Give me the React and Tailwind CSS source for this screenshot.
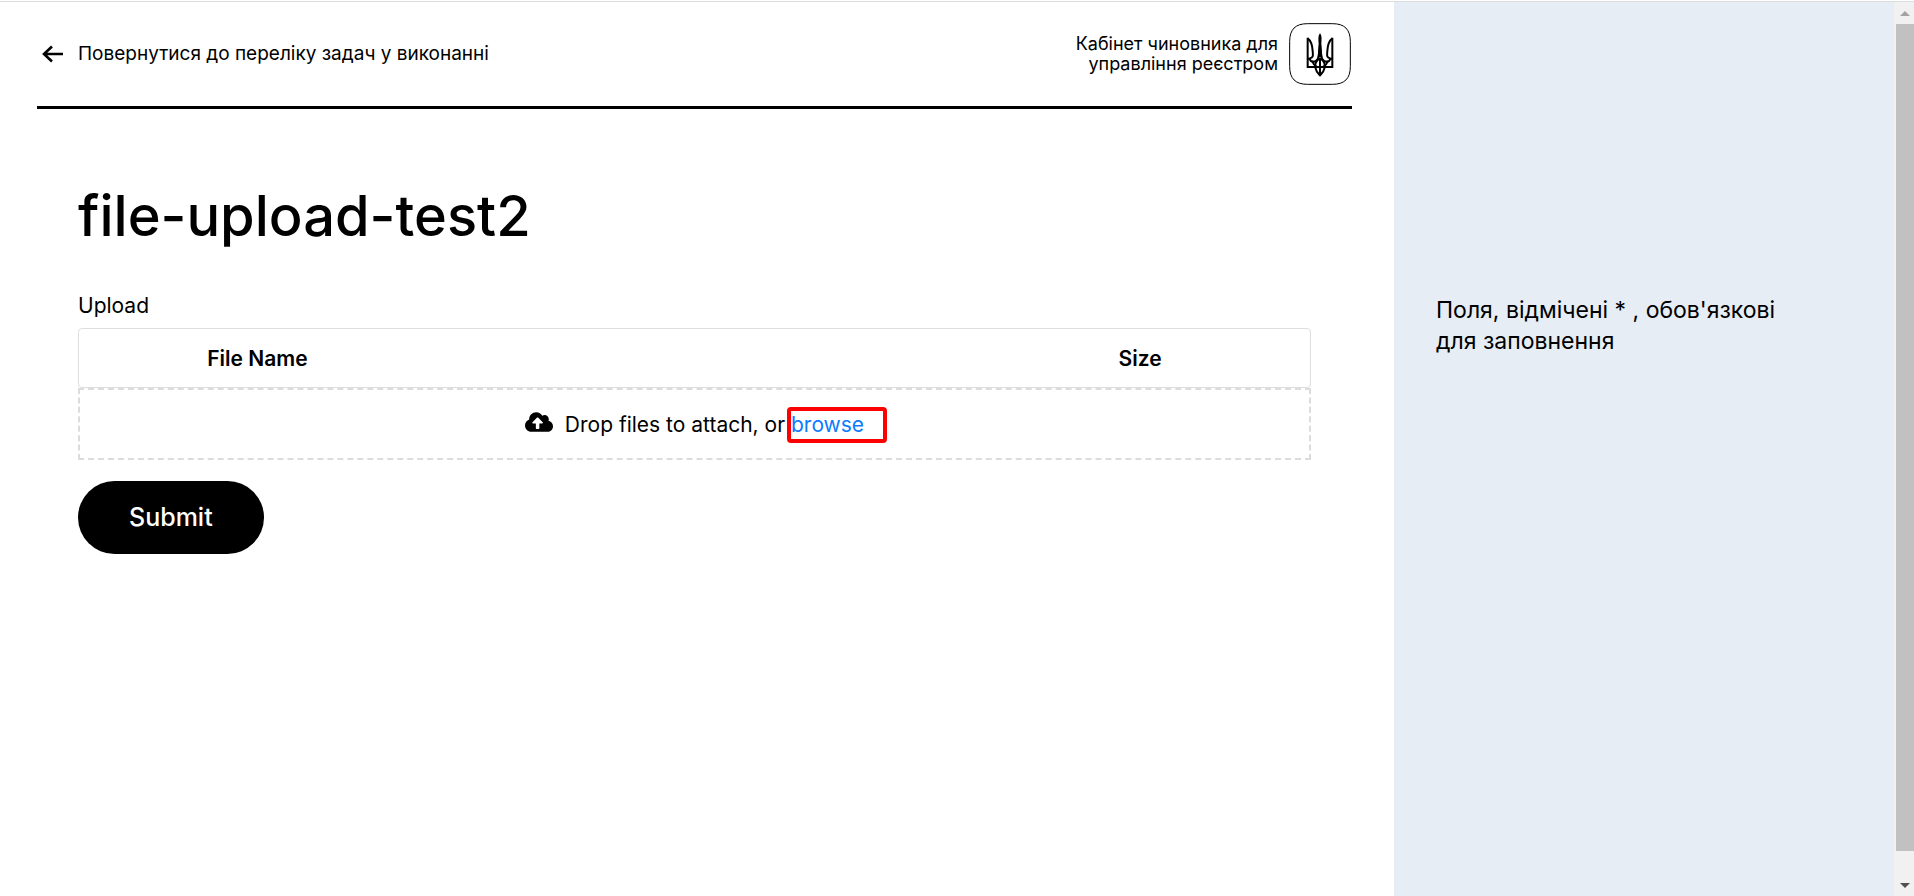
import React from "react";
import { FaCloudUploadAlt } from "react-icons/fa";

function BackArrow() {
  return (
    <svg className="h-[18px] w-[22px] shrink-0" viewBox="0 0 22 18" fill="none" stroke="#000" strokeWidth="2.6" aria-hidden="true">
      <path d="M21 9H2M10 1.500 2 9l8 7.500" />
    </svg>
  );
}

function Trident() {
  return (
    <svg className="size-[62px] shrink-0" viewBox="0 0 186 186" fill="none" stroke="#000" role="img" aria-label="Тризуб">
      <path strokeWidth="3" d="M56 2H130C167 2 184 19 184 56V130C184 167 167 184 130 184H56C19 184 2 167 2 130V56C2 19 19 2 56 2Z" />
      <g strokeWidth="6">
        <path d="M56 44V132H130V44" />
        <path d="M56 46C67 54 70 66 71 84C72 98 74 102 62 107C65 118 78 120 85 110C91 100 92 88 93 62" />
        <path d="M130 46C119 54 116 66 115 84C114 98 112 102 124 107C121 118 108 120 101 110C95 100 94 88 93 62" />
        <path d="M93 106C82 112 77 122 79 134C81 146 88 152 93 157C98 152 105 146 107 134C109 122 104 112 93 106Z" />
        <path d="M93 108V156M57 107H66M129 107H120" />
        <path d="M70 113C72 124 78 130 88 133M116 113C114 124 108 130 98 133" />
      </g>
      <path fill="#000" stroke="none" d="M93 31C99 38 98 50 97 62L100 102H86L89 62C88 50 87 38 93 31Z" />
    </svg>
  );
}

function Header() {
  return (
    <header className="flex h-[107px] items-center justify-between border-b-[3px] border-black pr-px">
      <a href="#tasks" className="flex items-center gap-[14px] pl-[5px] text-[19px]">
        <BackArrow />
        Повернутися до переліку задач у виконанні
      </a>
      <div className="flex items-center gap-[11px]">
        <p className="text-right text-lg leading-5">
          Кабінет чиновника для
          <br />
          управління реєстром
        </p>
        <Trident />
      </div>
    </header>
  );
}

function UploadField() {
  return (
    <section aria-labelledby="upload-label">
      <h2 id="upload-label" className="text-[21px] leading-7">Upload</h2>
      <div className="mt-2 rounded border border-[#dedede] px-2">
        <table className="w-full table-fixed text-left text-[21px] leading-7">
          <thead>
            <tr className="h-[58px]">
              <td className="w-1/12" />
              <th scope="col" className="w-9/12 px-[19px] pt-0.5 font-semibold">File Name</th>
              <th scope="col" className="w-2/12 px-[19px] pt-0.5 font-semibold">Size</th>
            </tr>
          </thead>
        </table>
      </div>
      <div className="flex h-[72px] items-center justify-center border-2 border-dashed border-[#dcdcdc] pt-0.5 text-[21px]">
        <FaCloudUploadAlt className="mr-3 mb-1.5 size-7" aria-hidden="true" />
        <span>Drop files to attach, or&nbsp;</span>
        <a href="#browse" className="relative text-[#0d7bff]">
          browse
          <span className="absolute -top-0.5 -left-1 h-9 w-[100px] rounded-sm border-4 border-[#ff0000]" />
        </a>
      </div>
    </section>
  );
}

function Scrollbar() {
  return (
    <div className="flex w-5 shrink-0 flex-col items-center bg-[#f1f1f1] pl-[2px]" aria-hidden="true">
      <svg className="h-[22px] w-[18px]" viewBox="0 0 18 22"><path fill="#a3a3a3" d="M4 14 9 9l5 5Z" /></svg>
      <div className="w-full grow bg-[#c1c1c1]" />
      <svg className="h-[45px] w-[18px]" viewBox="0 0 18 45"><path fill="#505050" d="M4 32h10l-5 5Z" /></svg>
    </div>
  );
}

export default function App() {
  return (
    <div className="flex min-h-screen flex-col bg-white pt-px font-['Inter',sans-serif] text-black">
      <div className="flex grow border-t border-[#dadcde]">
        <main className="grow pr-[42px] pl-[37px]">
          <Header />
          <div className="px-[41px] pt-[72px]">
            <h1 className="text-[56px] leading-[70px] font-medium">file-upload-test2</h1>
            <div className="mt-[41px]">
              <UploadField />
            </div>
            <button type="button" className="mt-[21px] h-[73px] rounded-full bg-black px-[51px] text-[25px] font-medium text-white">
              Submit
            </button>
          </div>
        </main>
        <aside className="w-[500px] shrink-0 bg-[#e6edf4] px-[42px] pt-[293px] text-[23px] leading-[31px]">
          Поля, відмічені * , обов'язкові
          <br />
          для заповнення
        </aside>
        <Scrollbar />
      </div>
    </div>
  );
}
